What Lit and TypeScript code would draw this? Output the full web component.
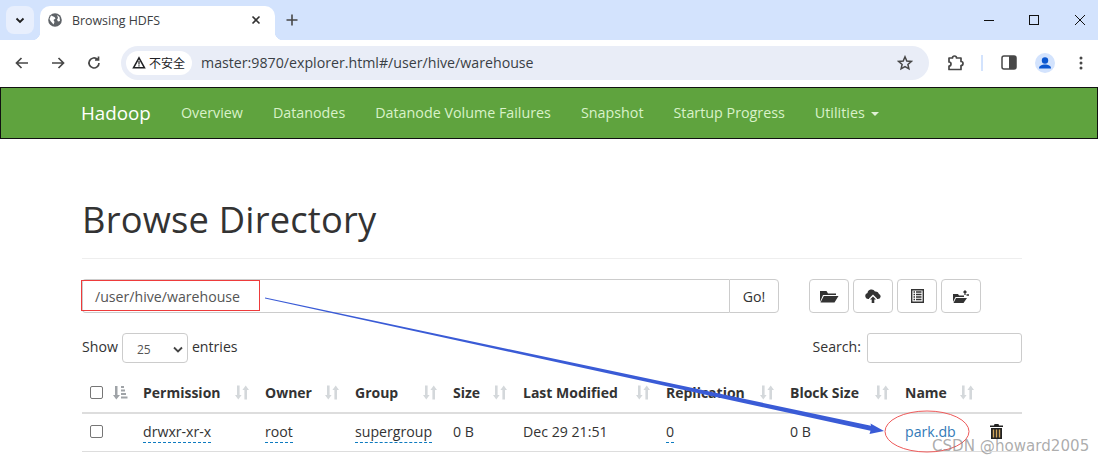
import { LitElement, html, css } from "lit";
import { customElement } from "lit/decorators.js";

const sortIcon = html`<svg class="sort" width="14" height="15" viewBox="0 0 14 15"><path fill="#d4d8db" d="M2 .5h2.600V10H6.600L3.300 14.500 0 10h2zM10.700 .5 14 5h-2V14.500H9.400V5H7.400z"/></svg>`;

const cols: [string, number][] = [
  ["Permission", 122], ["Owner", 90], ["Group", 98], ["Size", 70], ["Last Modified", 143],
  ["Replication", 124], ["Block Size", 115], ["Name", 85],
];

@customElement("app-root")
export class AppRoot extends LitElement {
  static styles = css`
    :host { display: block; width: 1098px; height: 462px; overflow: hidden; position: relative; background: #fff;
      font-family: "Open Sans", "Noto Sans CJK SC", sans-serif; color: #333; font-size: 14.150px; }
    .tabbar { height: 40px; background: #d3e3fd; display: flex; align-items: flex-end; padding-left: 6px; box-sizing: border-box; }
    .tabdrop { width: 28px; height: 28px; margin: 0 6px 6px 0; background: #e8effd; border-radius: 8px; display: flex; align-items: center; justify-content: center; }
    .tab { position: relative; width: 235px; height: 34px; background: #fff; border-radius: 10px 10px 0 0; display: flex; align-items: center; box-sizing: border-box; padding: 0 14px 6px 8px; font-size: 12.400px; color: #3c4043; }
    .tab::before, .tab::after { content: ""; position: absolute; bottom: 0; width: 8px; height: 8px; }
    .tab::before { left: -8px; background: radial-gradient(circle at 0 0, #d3e3fd 8px, #fff 8.500px); }
    .tab::after { right: -8px; background: radial-gradient(circle at 100% 0, #d3e3fd 8px, #fff 8.500px); }
    .tab .title { flex: 1; margin-left: 10px; }
    .newtab { margin: 0 0 6px 10px; height: 28px; display: flex; align-items: center; }
    .winbtns { margin-left: auto; align-self: stretch; display: flex; align-items: center; gap: 30px; padding-right: 11px; }
    .toolbar { height: 47px; background: #fff; display: flex; align-items: center; box-sizing: border-box; padding: 0 0 2px 14px; }
    .nav { display: flex; gap: 20px; width: 95px; align-items: center; }
    .omni { width: 808px; height: 34px; margin-left: 12px; border-radius: 17px; background: #e9edf7; display: flex; align-items: center; padding: 0 16px 0 5px; box-sizing: border-box; }
    .badge { height: 24px; border-radius: 12px; background: #fff; display: flex; align-items: center; gap: 3px; padding: 0 7px 0 6px; font-size: 12px; color: #202124; font-family: "Noto Sans CJK SC", sans-serif; }
    .url { margin-left: 9px; font-size: 14.200px; color: #3a3f45; flex: 1; }
    .tools { display: flex; align-items: center; margin-left: 17px; }
    .sep { width: 2px; height: 16px; background: #d3e3fd; margin: 0 18px 0 17px; }
    .navbar { height: 50px; background: #5fa33e; border: 1px solid #111; display: flex; align-items: center; padding: 0 0 0 80px; box-sizing: content-box; }
    .brand { color: #fff; font-size: 18.800px; margin-right: 30px; padding-bottom: 1px; }
    .link { color: #d9f2c9; margin-right: 30px; font-size: 14.300px; padding-bottom: 1px; }
    .caret { display: inline-block; border-top: 4px solid #e0f0d5; border-left: 4px solid transparent; border-right: 4px solid transparent; margin-left: 6px; vertical-align: 2px; }
    .main { padding: 0 76px 0 82px; }
    h1 { margin: 58px 0 0; font-weight: 400; font-size: 36.300px; line-height: 44px; color: #333; letter-spacing: 0.200px; padding-bottom: 17px; border-bottom: 1px solid #eee; }
    .pathrow { display: flex; margin-top: 20px; height: 34px; }
    .pathinput { width: 647px; box-sizing: border-box; border: 1px solid #ccc; border-right: none; color: #555; padding: 0 12px; display: flex; align-items: center; border-radius: 4px 0 0 4px; }
    .go { width: 50px; box-sizing: border-box; border: 1px solid #ccc; border-radius: 0 4px 4px 0; display: flex; align-items: center; justify-content: center; }
    .btns { display: flex; gap: 4px; margin-left: 30px; }
    .btn { width: 40px; height: 34px; box-sizing: border-box; border: 1px solid #ccc; border-radius: 4px; display: flex; align-items: center; justify-content: center; }
    .filters { display: flex; justify-content: space-between; align-items: center; margin-top: 20px; height: 30px; }
    .filters > div { display: flex; align-items: center; gap: 4px; }
    .label { padding-bottom: 3px; }
    .select { width: 66px; height: 30px; box-sizing: border-box; border: 1px solid #ccc; border-radius: 4px; display: flex; align-items: center; justify-content: space-between; padding: 2px 4px 0 14px; font-size: 12px; color: #555; }
    .search { width: 155px; height: 30px; box-sizing: border-box; border: 1px solid #ccc; border-radius: 3px; margin-left: 2px; }
    .thead { display: flex; margin-top: 11px; height: 36px; padding-bottom: 2px; border-bottom: 2px solid #ddd; align-items: center; font-weight: 700; }
    .trow { display: flex; height: 35px; padding-bottom: 2px; border-bottom: 1px solid #ddd; align-items: center; }
    .chk { width: 13px; height: 13px; box-sizing: border-box; border: 1px solid #767676; border-radius: 2px; margin-left: 8px; flex: none; }
    .c0 { width: 61px; flex: none; display: flex; align-items: center; gap: 10px; }
    .th { display: flex; align-items: center; justify-content: space-between; flex: none; }
    .th span { font-size: 14px; }
    .cell { flex: none; }
    .th .sort { margin-right: 16px; }
    .dash { border-bottom: 1px dashed #0d7bc0; padding-bottom: 1px; }
    .a { color: #337ab7; }
    .overlay { position: absolute; left: 0; top: 0; pointer-events: none; }
    .wm { position: absolute; left: 932px; top: 439px; line-height: 15px; font-family: "DejaVu Sans", sans-serif; font-size: 15.100px; color: rgba(120,120,120,.62); white-space: nowrap; }
  `;

  render() {
    const ic = "#474747";
    return html`
      <div class="tabbar">
        <div class="tabdrop"><svg width="10" height="7" viewBox="0 0 10 7"><path d="M1.500 1.500 5 5l3.500-3.500" fill="none" stroke="#1f1f1f" stroke-width="1.800"/></svg></div>
        <div class="tab">
          <svg width="14" height="14" viewBox="0 0 14 14"><circle cx="7" cy="7" r="6.800" fill="#5f6368"/><path fill="#fff" d="M3 2.500 6.500 4l1 1.500-2 1.500 1 2-1 2.500L2.500 8 1.500 6zM9 2l2.500 2L12 8l-2 .5-1-2 1-1.500z"/></svg>
          <span class="title">Browsing HDFS</span>
          <svg width="10" height="10" viewBox="0 0 10 10"><path d="M1.500 1.500l7 7M8.500 1.500l-7 7" stroke="#333" stroke-width="1.600"/></svg>
        </div>
        <div class="newtab"><svg width="14" height="14" viewBox="0 0 14 14"><path d="M7 1.500v11M1.500 7h11" stroke="#474747" stroke-width="1.600"/></svg></div>
        <div class="winbtns">
          <svg width="12" height="12" viewBox="0 0 12 12"><path d="M1 6.500h10" stroke="#111" stroke-width="1"/></svg>
          <svg width="18" height="12" viewBox="0 0 18 12"><rect x="4.500" y="1.500" width="9" height="9" fill="none" stroke="#111"/></svg>
          <svg width="14" height="12" viewBox="0 0 12 12"><path d="M1 1l10 10M11 1 1 11" stroke="#111"/></svg>
        </div>
      </div>
      <div class="toolbar">
        <div class="nav">
          <svg width="16" height="14" viewBox="0 0 16 14"><path d="M14 7H3M7.500 2 2.500 7l5 5" fill="none" stroke="${ic}" stroke-width="1.700"/></svg>
          <svg width="16" height="14" viewBox="0 0 16 14"><path d="M2 7h11M8.500 2l5 5-5 5" fill="none" stroke="${ic}" stroke-width="1.700"/></svg>
          <svg width="16" height="16" viewBox="0 0 16 16"><path d="M13 8a5 5 0 1 1-1.500-3.600M12.500 1.500v3.500H9" fill="none" stroke="${ic}" stroke-width="1.700"/></svg>
        </div>
        <div class="omni">
          <div class="badge"><svg width="14" height="13" viewBox="0 0 14 13"><path d="M7 1.800 12.500 11.800h-11z" fill="none" stroke="#202124" stroke-width="1.500"/><path d="M7 5v3.500M7 9.300v1.200" stroke="#202124" stroke-width="1.200"/></svg>不安全</div>
          <span class="url">master:9870/explorer.html#/user/hive/warehouse</span>
          <svg width="16" height="16" viewBox="0 0 16 16"><path d="M8 1.800 9.800 6l4.500.4-3.400 3 1 4.400L8 11.500l-3.900 2.300 1-4.400-3.400-3L6.200 6z" fill="none" stroke="${ic}" stroke-width="1.500"/></svg>
        </div>
        <div class="tools">
          <svg width="18" height="18" viewBox="0 0 18 18"><path d="M3 4h3.500a2 2 0 0 1 4 0H15v3.500a2 2 0 0 1 0 4V15.500H3v-3.500a1.800 1.800 0 0 0 0-4z" fill="none" stroke="${ic}" stroke-width="1.700" stroke-linejoin="round"/></svg>
          <div class="sep"></div>
          <svg width="16" height="15" viewBox="0 0 16 15"><rect x="1" y="1" width="14" height="13" rx="2" fill="none" stroke="${ic}" stroke-width="1.500"/><rect x="8" y="1" width="7" height="13" fill="${ic}"/></svg>
          <svg style="margin-left:18px" width="20" height="20" viewBox="0 0 20 20"><circle cx="10" cy="10" r="10" fill="#d3e3fd"/><circle cx="10" cy="7.500" r="3.200" fill="#0b57d0"/><path d="M4 15.500c0-3 3-4 6-4s6 1 6 4z" fill="#0b57d0"/></svg>
          <svg style="margin-left:24px" width="4" height="16" viewBox="0 0 4 16"><circle cx="2" cy="3" r="1.500" fill="${ic}"/><circle cx="2" cy="8" r="1.500" fill="${ic}"/><circle cx="2" cy="13" r="1.500" fill="${ic}"/></svg>
        </div>
      </div>
      <div class="navbar">
        <span class="brand">Hadoop</span>
        <span class="link">Overview</span>
        <span class="link">Datanodes</span>
        <span class="link">Datanode Volume Failures</span>
        <span class="link">Snapshot</span>
        <span class="link">Startup Progress</span>
        <span class="link">Utilities<i class="caret"></i></span>
      </div>
      <div class="main">
        <h1>Browse Directory</h1>
        <div class="pathrow">
          <div class="pathinput">/user/hive/warehouse</div>
          <div class="go">Go!</div>
          <div class="btns">
            <div class="btn"><svg width="19" height="14" viewBox="0 0 19 14"><path fill="#333" d="M0 2v11l3-7h13V4.500H8L6.500 2zM3.800 7 .5 13.500h14L18.500 7z"/></svg></div>
            <div class="btn"><svg width="16" height="14" viewBox="0 0 16 14"><path fill="#333" d="M4 10H3a3 3 0 0 1-.500-5.900A4 4 0 0 1 10 2.500a3.500 3.500 0 0 1 4 2.500A2.600 2.600 0 0 1 13 10h-1V9.500L8 5.500 4 9.500zM8 7.500 11 10.500H9.300V14H6.700v-3.500H5z"/></svg></div>
            <div class="btn"><svg width="13" height="14" viewBox="0 0 13 14"><path fill="none" stroke="#333" stroke-width="1.400" d="M.7.700h11.600v12.600H.7z"/><path stroke="#333" stroke-width="1.300" d="M2.500 3h1.500M2.500 5.500h1.500M2.500 8h1.500M2.500 10.500h1.500M5 3h5.500M5 5.500h5.500M5 8h5.500M5 10.500h5.500"/></svg></div>
            <div class="btn"><svg width="16" height="13" viewBox="0 0 16 13"><path fill="#333" d="M0 4v8l2.500-5H11V5.500H6L5 4zM3 8 .5 13h10L14 8z"/><path stroke="#333" stroke-width="1.300" fill="none" d="M12 5V1M10.500 2.500 12 1l1.500 1.500M13.500 5h2.500"/></svg></div>
          </div>
        </div>
        <div class="filters">
          <div><span class="label">Show</span> <span class="select">25<svg width="10" height="7" viewBox="0 0 10 7"><path d="M1 1.500 5 5.500l4-4" fill="none" stroke="#444" stroke-width="1.800"/></svg></span> <span class="label">entries</span></div>
          <div><span class="label">Search:</span> <span class="search"></span></div>
        </div>
        <div class="thead">
          <div class="c0"><span class="chk"></span><svg width="15" height="15" viewBox="0 0 15 15"><path fill="#9fa3a7" d="M2 1h2.500v9H7l-3.700 4.500L0 10h2zM8 1h3v2H8zM8 4.500h4v2H8zM8 8h5v2H8zM8 11.500h6.500v2H8z"/></svg></div>
          ${cols.map(([n, w]) => html`<div class="th" style="width:${w}px"><span>${n}</span>${sortIcon}</div>`)}
        </div>
        <div class="trow">
          <div class="c0"><span class="chk"></span></div>
          <div class="cell" style="width:122px"><span class="dash">drwxr-xr-x</span></div>
          <div class="cell" style="width:90px"><span class="dash">root</span></div>
          <div class="cell" style="width:98px"><span class="dash">supergroup</span></div>
          <div class="cell" style="width:70px">0 B</div>
          <div class="cell" style="width:143px">Dec 29 21:51</div>
          <div class="cell" style="width:124px"><span class="dash">0</span></div>
          <div class="cell" style="width:115px">0 B</div>
          <div class="cell a" style="width:85px">park.db</div>
          <svg width="13" height="15" viewBox="0 0 13 15"><path fill="#222" d="M4.500 0h4l.5 1.500h4V3H0V1.500h4z"/><path fill="#222" d="M1 4h11v11H1z"/><path stroke="#d2a65c" stroke-width="1.400" d="M3.500 5.500v8M6.500 5.500v8M9.500 5.500v8"/></svg>
        </div>
      </div>
      <svg class="overlay" width="1098" height="462" viewBox="0 0 1098 462">
        <rect x="81.500" y="280.500" width="178" height="30" fill="none" stroke="#ee3b3b"/>
        <ellipse cx="927" cy="431.500" rx="42" ry="20.500" fill="none" stroke="#ee5a5a"/>
        <path d="M265 297.600 871 425.700 870.500 423.500 884 431 869.500 434 870.500 430.700 265 298.400z" fill="#3a5bd6"/>
      </svg>
      <div class="wm">CSDN @howard2005</div>
    `;
  }
}
